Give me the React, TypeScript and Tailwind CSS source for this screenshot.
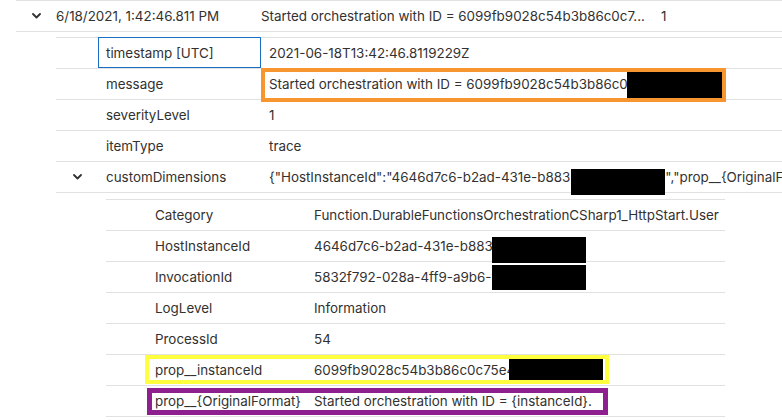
import React from "react";

const Chevron = () => (
  <svg width="9" height="6" viewBox="0 0 9 6" fill="none">
    <path d="M1 1 L4.5 4.5 L8 1" stroke="#323130" strokeWidth="1.8" strokeLinecap="round" strokeLinejoin="round" />
  </svg>
);

const font = { fontFamily: "Inter, 'Noto Sans', sans-serif" };

function Row({ label, value, children, chevron }: { label: string; value: React.ReactNode; children?: React.ReactNode; chevron?: boolean }) {
  return (
    <div className="relative flex h-[31px] items-center border-b border-[#e1e1e1]">
      <div className="flex w-[42px] shrink-0 justify-center">{chevron ? <Chevron /> : null}</div>
      <div className="w-[163px] shrink-0 pl-[8px]">{label}</div>
      <div className="flex min-w-0 flex-1 items-center overflow-hidden whitespace-nowrap pl-[8px]">{value}</div>
      {children}
    </div>
  );
}

function InnerRow({ label, value, children }: { label: string; value: React.ReactNode; children?: React.ReactNode }) {
  return (
    <div className="relative flex h-[31px] items-center border-b border-[#e1e1e1]">
      <div className="w-[200px] shrink-0 pl-[49px]">{label}</div>
      <div className="min-w-0 flex-1 whitespace-nowrap pl-[8px]">{value}</div>
      {children}
    </div>
  );
}

export default function App() {
  return (
    <div className="h-[420px] w-[782px] overflow-hidden bg-white text-[13.4px] text-[#323130]" style={font}>
      <div className="ml-[16px] flex h-[32px] items-center border-y border-[#e1e1e1]">
        <div className="flex w-[40px] shrink-0 justify-center"><Chevron /></div>
        <div className="w-[205px] shrink-0">6/18/2021, 1:42:46.811 PM</div>
        <div className="w-[400px] shrink-0 whitespace-nowrap">Started orchestration with ID = 6099fb9028c54b3b86c0c7...</div>
        <div>1</div>
      </div>
      <div className="ml-[56px] mt-[5px] border-t border-[#e1e1e1]">
        <Row label="timestamp [UTC]" value="2021-06-18T13:42:46.8119229Z">
          <div className="absolute left-[42px] top-[-1px] h-[31px] w-[163px] border border-[#1a6fc4]" />
        </Row>
        <Row label="message" value="Started orchestration with ID = 6099fb9028c54b3b86c0c">
          <div className="absolute left-[205px] top-[-1px] h-[34px] w-[465px] border-4 border-[#f7962f]" />
          <div className="absolute left-[571px] top-[3px] h-[26px] w-[95px] bg-black" />
        </Row>
        <Row label="severityLevel" value="1" />
        <Row label="itemType" value="trace" />
        <Row
          chevron
          label="customDimensions"
          value={
            <>
              <span>{'{"HostInstanceId":"4646d7c6-b2ad-431e-b883'}</span>
              <span className="ml-[1px] mt-[10px] inline-block h-[26px] w-[94px] shrink-0 bg-black" />
              <span>{'","prop__{OriginalFo'}</span>
            </>
          }
        />
      </div>
      <div className="ml-[106px] mt-[6px] w-[619px] border-t border-[#e1e1e1]">
        <InnerRow label="Category" value="Function.DurableFunctionsOrchestrationCSharp1_HttpStart.User" />
        <InnerRow label="HostInstanceId" value="4646d7c6-b2ad-431e-b883">
          <div className="absolute left-[386px] top-[6px] h-[26px] w-[94px] bg-black" />
        </InnerRow>
        <InnerRow label="InvocationId" value="5832f792-028a-4ff9-a9b6-1">
          <div className="absolute left-[386px] top-[3px] h-[25px] w-[94px] bg-black" />
        </InnerRow>
        <InnerRow label="LogLevel" value="Information" />
        <InnerRow label="ProcessId" value="54" />
        <InnerRow label="prop__instanceId" value="6099fb9028c54b3b86c0c75e4">
          <div className="absolute left-[39px] top-0 h-[29px] w-[464px] border-4 border-[#ffff40]" />
          <div className="absolute left-[403px] top-[4px] h-[21px] w-[94px] bg-black" />
        </InnerRow>
        <InnerRow label="prop__{OriginalFormat}" value="Started orchestration with ID = {instanceId}.">
          <div className="absolute left-[41px] top-[2px] h-[27px] w-[461px] border-[5px] border-[#8e1f8e]" />
        </InnerRow>
      </div>
    </div>
  );
}
